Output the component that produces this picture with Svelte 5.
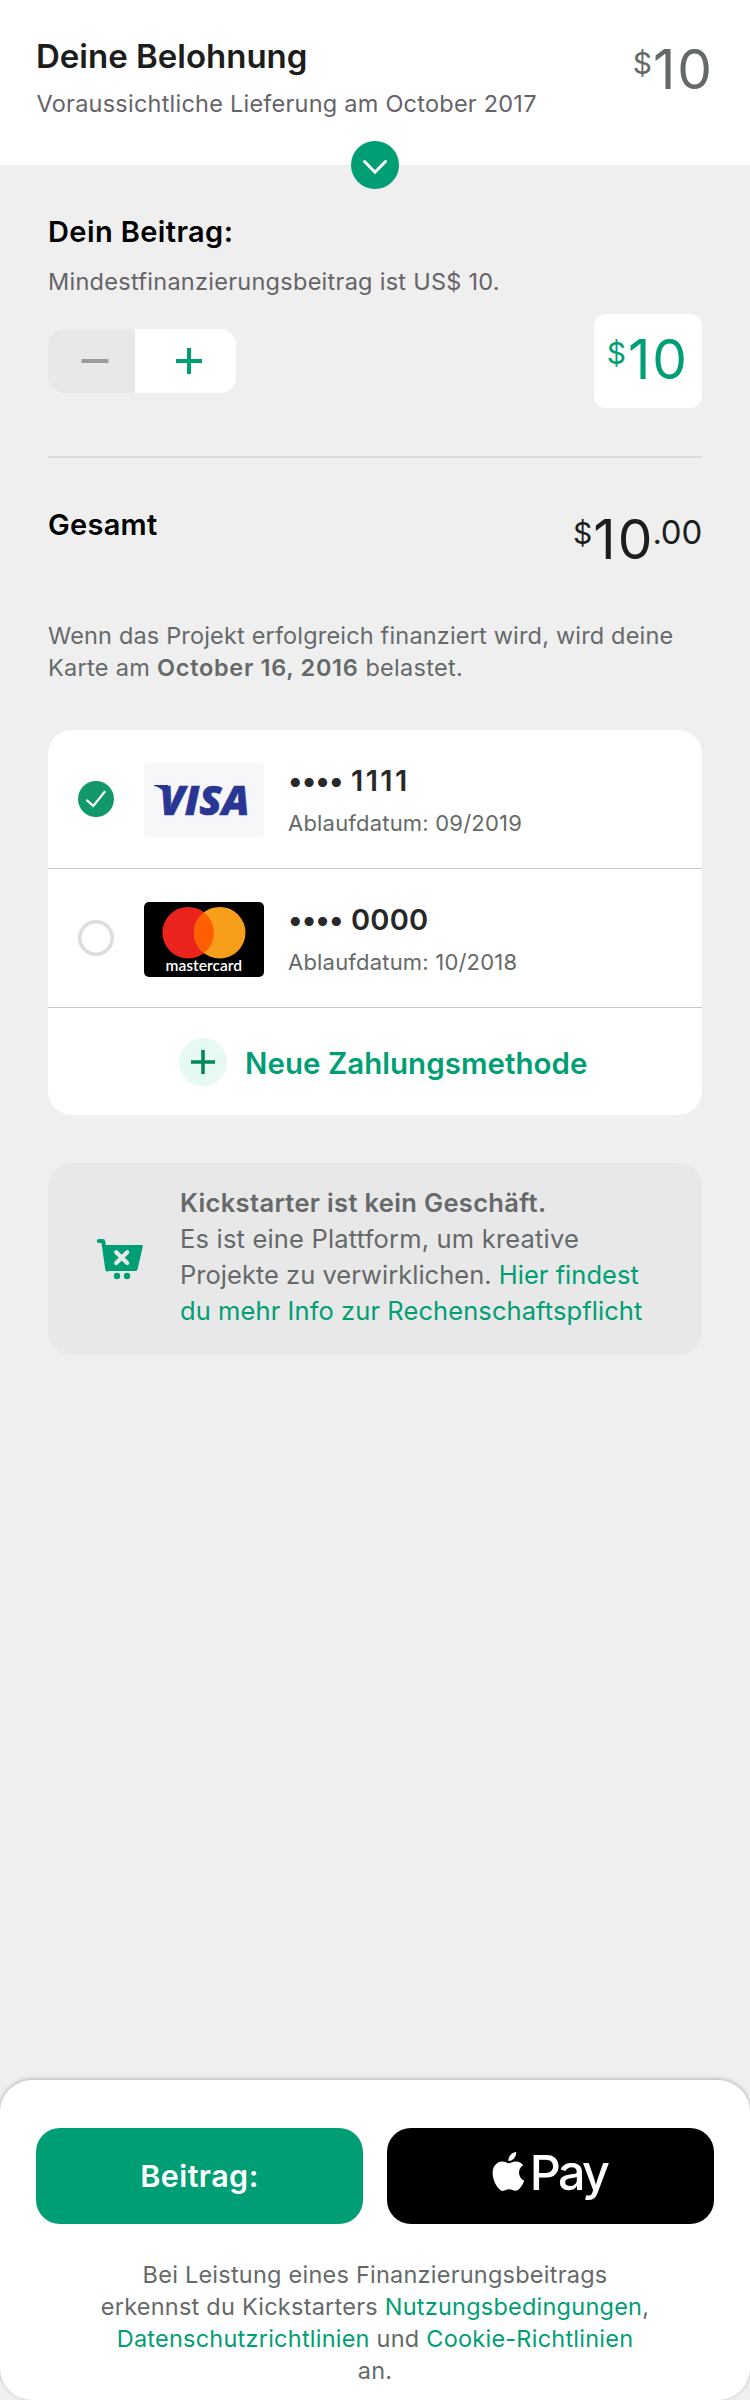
<script>
  let amount = $state(10);
  let selected = $state('visa');

  const cards = [
    { brand: 'visa', digits: '1111', expiry: '09/2019' },
    { brand: 'mastercard', digits: '0000', expiry: '10/2018' }
  ];
</script>

<div class="page">
  <header>
    <div>
      <h1>Deine Belohnung</h1>
      <p class="delivery">Voraussichtliche Lieferung am October 2017</p>
    </div>
    <div class="amount grey"><span class="cur">$</span><span class="num">10</span></div>
    <button class="toggle" aria-label="Details">
      <svg width="48" height="48" viewBox="0 0 48 48"><path d="M13.5 20.5 24 31.2 34.5 20.5" fill="none" stroke="#fff" stroke-width="3" stroke-linecap="round" stroke-linejoin="miter" /></svg>
    </button>
  </header>

  <main>
    <h2>Dein Beitrag:</h2>
    <p class="minimum">Mindestfinanzierungsbeitrag ist US$ 10.</p>

    <div class="pledge">
      <div class="stepper">
        <button class="minus" aria-label="Weniger" onclick={() => (amount = Math.max(10, amount - 1))}>
          <svg width="28" height="28" viewBox="0 0 28 28"><path d="M.5 14h27" stroke="#9b9b9b" stroke-width="4" /></svg>
        </button>
        <button class="plus" aria-label="Mehr" onclick={() => (amount += 1)}>
          <svg width="28" height="28" viewBox="0 0 28 28"><path d="M1 14h26M14 1v26" stroke="#009e74" stroke-width="4" /></svg>
        </button>
      </div>
      <div class="amount box"><span class="cur">$</span><span class="num">{amount}</span></div>
    </div>

    <div class="total">
      <h2>Gesamt</h2>
      <div class="amount dark"><span class="cur">$</span><span class="num">{amount}</span><span class="cents">.00</span></div>
    </div>

    <p class="notice">
      <span class="n1">Wenn das Projekt erfolgreich finanziert wird, wird deine</span><br />
      <span class="n2">Karte am <b>October 16, 2016</b> belastet.</span>
    </p>

    <section class="methods">
      {#each cards as card}
        <div class="method">
          {#if selected === card.brand}
            <svg class="radio" width="36" height="36" viewBox="0 0 36 36">
              <circle cx="18" cy="18" r="18" fill="#12996a" />
              <path d="M9 19.4 15.3 25 26.7 10.8" fill="none" stroke="#fff" stroke-width="2.2" stroke-linecap="round" />
            </svg>
          {:else}
            <svg class="radio" width="36" height="36" viewBox="0 0 36 36"><circle cx="18" cy="18" r="16.2" fill="none" stroke="#dcdedd" stroke-width="3.6" /></svg>
          {/if}

          {#if card.brand === 'visa'}
            <svg class="logo" width="120" height="74" viewBox="0 0 120 74">
              <rect width="120" height="74" rx="5" fill="#f7f7fa" />
              <path d="M10 22H24L26.5 40C23 30.5 18 25 10 22.8Z" fill="#2a3693" />
              <text class="visa" x="15.5" y="51.5" textLength="90" lengthAdjust="spacingAndGlyphs">VISA</text>
            </svg>
          {:else}
            <svg class="logo" width="120" height="75" viewBox="0 0 120 75">
              <rect width="120" height="75" rx="5" fill="#000" />
              <circle cx="44.2" cy="30.7" r="25.8" fill="#eb231d" />
              <circle cx="75.7" cy="30.7" r="25.8" fill="#f79e1b" />
              <path d="M59.95 10.3a25.8 25.8 0 0 1 0 40.8a25.8 25.8 0 0 1 0-40.8z" fill="#ff5f00" />
              <text class="mc" x="21.5" y="69.3" textLength="76.5" lengthAdjust="spacingAndGlyphs">mastercard</text>
            </svg>
          {/if}

          <div class="info">
            <div class="number"><span class="dots">••••</span><span class={`d${card.digits}`}>{card.digits}</span></div>
            <div class="expiry">Ablaufdatum: {card.expiry}</div>
          </div>
        </div>
      {/each}
      <button class="add">
        <svg width="48" height="48" viewBox="0 0 48 48">
          <circle cx="24" cy="24" r="24" fill="#e6faf1" />
          <path d="M12 24h24M24 12v24" stroke="#028858" stroke-width="3.6" />
        </svg>
        <span>Neue Zahlungsmethode</span>
      </button>
    </section>

    <section class="hint">
      <svg width="60" height="60" viewBox="0 0 60 60">
        <path d="M8.8 11H13.2L17.3 39.5" fill="none" stroke="#009e74" stroke-width="4" stroke-linecap="round" stroke-linejoin="round" />
        <path d="M13.6 15H51.5Q53.3 15 52.8 16.8L47.4 39.4Q47 40.9 45.5 40.9H19Q17.4 40.9 17.1 39.3Z" fill="#009e74" />
        <path d="M26.2 22.2 37.2 33M37.2 22.2 26.2 33" stroke="#e8e8e8" stroke-width="4.2" stroke-linecap="round" />
        <circle cx="27" cy="46" r="3.2" fill="#009e74" />
        <circle cx="37" cy="46" r="3.2" fill="#009e74" />
      </svg>
      <p>
        <b>Kickstarter ist kein Geschäft.</b><br />
        <span class="h2">Es ist eine Plattform, um kreative</span><br />
        <span class="h3">Projekte zu verwirklichen. <a href="#info">Hier findest</a></span><br />
        <a class="h4" href="#info">du mehr Info zur Rechenschaftspflicht</a>
      </p>
    </section>
  </main>

  <footer>
    <div class="actions">
      <button class="submit">Beitrag:</button>
      <button class="apple" aria-label="Apple Pay">
        <svg width="120" height="64" viewBox="0 -4 120 64">
          <path transform="translate(-2 4) scale(1.62)" fill="#fff" d="M12.152 6.896c-.948 0-2.415-1.078-3.96-1.04-2.04.027-3.91 1.183-4.961 3.014-2.117 3.675-.546 9.103 1.519 12.09 1.013 1.454 2.208 3.09 3.792 3.039 1.52-.065 2.09-.987 3.935-.987 1.831 0 2.35.987 3.96.948 1.637-.026 2.676-1.48 3.676-2.948 1.156-1.688 1.636-3.325 1.662-3.415-.039-.013-3.182-1.221-3.22-4.857-.026-3.04 2.48-4.494 2.597-4.559-1.429-2.09-3.623-2.324-4.39-2.376-2-.156-3.675 1.09-4.61 1.09zM15.53 3.83c.843-1.012 1.4-2.427 1.245-3.83-1.207.052-2.662.805-3.532 1.818-.78.896-1.454 2.338-1.273 3.714 1.338.104 2.715-.688 3.559-1.701" />
          <text class="pay" x="38.8" y="42.3">Pay</text>
        </svg>
      </button>
    </div>
    <p class="legal">
      Bei Leistung eines Finanzierungsbeitrags<br />
      erkennst du Kickstarters <a href="#terms">Nutzungsbedingungen</a>,<br />
      <a href="#privacy">Datenschutzrichtlinien</a> und <a href="#cookies">Cookie-Richtlinien</a><br />
      an.
    </p>
  </footer>
</div>

<style>
  :global(body) { margin: 0; background: #efefef; }
  .page {
    width: 750px;
    height: 2400px;
    display: flex;
    flex-direction: column;
    background: #efefef;
    font-family: Inter, "Liberation Sans", sans-serif;
    color: #656969;
  }
  h1, h2, p { margin: 0; white-space: nowrap; }
  button { border: 0; padding: 0; font-family: inherit; cursor: pointer; }
  svg { display: block; flex: none; }
  a { color: #009e74; text-decoration: none; }

  header {
    position: relative;
    display: flex;
    justify-content: space-between;
    box-sizing: border-box;
    height: 165px;
    padding: 36px 36px 0;
    background: #fff;
  }
  h1 { font-size: 33px; line-height: 40px; font-weight: 600; letter-spacing: 0; color: #1c1d1d; }
  .delivery { margin-top: 12px; padding-left: 0.5px; font-size: 23.5px; line-height: 31px; letter-spacing: 0.23px; color: #656368; }
  .toggle {
    position: absolute;
    left: 351px;
    bottom: -24px;
    width: 48px;
    height: 48px;
    border-radius: 50%;
    background: #009e74;
  }

  .amount { display: flex; align-items: flex-start; }
  .cur { margin: 3.5px 1px 0 0; font-size: 30px; line-height: 40px; }
  .num { font-size: 55px; line-height: 60px; letter-spacing: 2px; }
  .cents { margin: 3px 0 0 -2px; font-size: 33px; line-height: 40px; letter-spacing: -0.24px; }
  .grey { padding-top: 3px; color: #656969; }
  .dark { padding-top: 2px; color: #1c1d1d; }
  .box {
    box-sizing: border-box;
    width: 108px;
    height: 94px;
    padding: 15px 13px 0 0;
    justify-content: flex-end;
    border-radius: 12px;
    background: #fff;
    color: #009e74;
  }
  .box .cur { margin-right: 2px; }

  main { padding: 49px 48px 0; }
  h2 { font-size: 29px; line-height: 35px; font-weight: 600; letter-spacing: 0.4px; color: #000; }
  .minimum { margin-top: 17px; font-size: 23.5px; line-height: 31px; letter-spacing: 0.27px; color: #656368; }

  .pledge {
    display: flex;
    align-items: center;
    justify-content: space-between;
    margin-top: 17px;
    padding-bottom: 48px;
    border-bottom: 2px solid #dcdedd;
  }
  .stepper { display: flex; height: 64px; width: 188px; border-radius: 16px; overflow: hidden; background: #fff; }
  .stepper button { display: flex; align-items: center; background: none; }
  .stepper .minus { width: 87px; padding-left: 33px; background: #e8e8e8; }
  .stepper .plus { flex: 1; padding-left: 40px; }

  .total { display: flex; justify-content: space-between; padding-top: 49px; }
  .total h2 { letter-spacing: 0.287px; }

  .notice { margin-top: 51px; font-size: 23.5px; line-height: 32px; }
  .n1 { letter-spacing: 0.17px; }
  .n2 { letter-spacing: 0.3px; }
  .n2 b { font-weight: 600; letter-spacing: 0.7px; }

  .methods { margin-top: 46px; border-radius: 24px; background: #fff; }
  .method {
    display: flex;
    height: 138px;
    border-bottom: 1px solid #c6c6c8;
    padding-left: 30px;
    align-items: flex-start;
  }
  .radio { margin-top: 51px; }
  .logo { margin: 33px 24px 0 30px; }
  .visa { font: italic 800 41px "Open Sans", sans-serif; fill: #2a3693; stroke: #2a3693; stroke-width: 0.6px; }
  .mc { font: 600 15px Lato, sans-serif; fill: #fff; }
  .info { padding-top: 33px; }
  .number { display: flex; font-size: 29px; line-height: 35px; font-weight: 600; color: #282828; }
  .dots { width: 63px; letter-spacing: -0.93px; }
  .d1111 { letter-spacing: 2.4px; }
  .d0000 { letter-spacing: 0.2px; }
  .expiry { margin-top: 11px; font-size: 22px; line-height: 28px; letter-spacing: 0.2px; }
  .add {
    display: flex;
    align-items: center;
    gap: 18px;
    width: 100%;
    height: 107px;
    padding-left: 131px;
    background: none;
    color: #009e74;
    font-size: 29.5px;
    line-height: 36px;
    font-weight: 600;
    letter-spacing: 0.03px;
  }
  .add span { padding-top: 3px; }

  .hint {
    display: flex;
    gap: 30px;
    box-sizing: border-box;
    height: 192px;
    margin-top: 48px;
    padding: 22px 0 0 42px;
    border-radius: 24px;
    background: #e8e8e8;
    font-size: 25.5px;
    line-height: 36px;
  }
  .hint svg { margin-top: 45px; }
  .hint b { font-weight: 600; letter-spacing: 0.34px; }
  .h2 { letter-spacing: 0.186px; }
  .h3 { letter-spacing: 0.02px; }
  .h4 { letter-spacing: 0.084px; }

  footer {
    box-sizing: border-box;
    height: 320px;
    margin-top: auto;
    padding: 48px 36px 0;
    border-radius: 32px;
    background: #fff;
    box-shadow: 0 -1px 4px rgba(0, 0, 0, 0.25);
  }
  .actions { display: flex; gap: 24px; }
  .actions button { display: flex; align-items: center; justify-content: center; flex: 1; height: 96px; border-radius: 24px; }
  .submit { background: #009e74; color: #fff; font-size: 30.5px; line-height: 38px; font-weight: 600; letter-spacing: 0.45px; }
  .apple { background: #000; }
  .pay { font: 500 48.5px Inter, sans-serif; letter-spacing: -2.8px; fill: #fff; }
  .legal { margin-top: 35px; text-align: center; font-size: 23.5px; line-height: 32px; letter-spacing: 0.23px; }
</style>
